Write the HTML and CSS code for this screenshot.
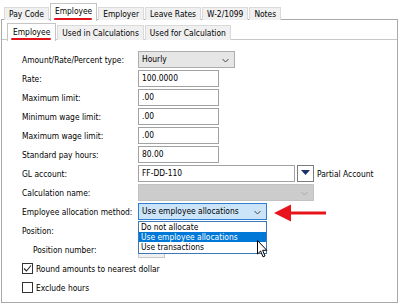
FILE: index.html
```html
<!DOCTYPE html>
<html>
<head>
<meta charset="utf-8">
<link rel="stylesheet" href="styles.css">
</head>
<body>
<div class="window">
  <div class="tabs top-tabs">
    <div class="tab">Pay Code</div>
    <div class="tab active">Employee<span class="mark"></span></div>
    <div class="tab">Employer</div>
    <div class="tab">Leave Rates</div>
    <div class="tab">W-2/1099</div>
    <div class="tab">Notes</div>
  </div>
  <div class="panel">
    <div class="tabs sub-tabs">
      <div class="tab active">Employee<span class="mark"></span></div>
      <div class="tab">Used in Calculations</div>
      <div class="tab">Used for Calculation</div>
    </div>
    <div class="inner">
      <div class="form">
        <div class="label">Amount/Rate/Percent type:</div>
        <div class="field"><div class="box select w97">Hourly<svg class="chev" width="7" height="5" viewBox="0 0 7 5"><path d="M0.5 1 L3.5 4 L6.5 1" fill="none" stroke="#444" stroke-width="1"/></svg></div></div>

        <div class="label">Rate:</div>
        <div class="field"><div class="box w81">100.0000</div></div>

        <div class="label">Maximum limit:</div>
        <div class="field"><div class="box w81">.00</div></div>

        <div class="label">Minimum wage limit:</div>
        <div class="field"><div class="box w81">.00</div></div>

        <div class="label">Maximum wage limit:</div>
        <div class="field"><div class="box w81">.00</div></div>

        <div class="label">Standard pay hours:</div>
        <div class="field"><div class="box w81">80.00</div></div>

        <div class="label">GL account:</div>
        <div class="field">
          <div class="box w156">FF-DD-110</div>
          <div class="btn"><svg width="9" height="5" viewBox="0 0 9 5"><path d="M0 0 L9 0 L4.5 5 Z" fill="#1c2f6e"/></svg></div>
          <span class="side">Partial Account</span>
        </div>

        <div class="label">Calculation name:</div>
        <div class="field"><div class="box disabled w176"><svg class="chev" width="7" height="5" viewBox="0 0 7 5"><path d="M0.5 1 L3.5 4 L6.5 1" fill="none" stroke="#a8a8a8" stroke-width="1"/></svg></div></div>

        <div class="label">Employee allocation method:</div>
        <div class="field"><div class="box select focus w129">Use employee allocations<svg class="chev" width="7" height="5" viewBox="0 0 7 5"><path d="M0.5 1 L3.5 4 L6.5 1" fill="none" stroke="#444" stroke-width="1"/></svg></div></div>

        <div class="label">Position:</div>
        <div class="field"></div>

        <div class="label indent">Position number:</div>
        <div class="field"><div class="box mini"></div></div>

        <div class="check-row"><span class="check checked"><svg width="9" height="9" viewBox="0 0 9 9"><path d="M1 4.5 L3.5 7 L8 1.5" fill="none" stroke="#222" stroke-width="1.1"/></svg></span>Round amounts to nearest dollar</div>
        <div class="check-row"><span class="check"></span>Exclude hours</div>
      </div>
    </div>
  </div>

  <div class="dropdown">
    <div class="opt">Do not allocate</div>
    <div class="opt sel">Use employee allocations</div>
    <div class="opt">Use transactions</div>
  </div>

  <svg class="arrow" width="52" height="20" viewBox="0 0 52 20"><polygon points="0,10 17,1.5 17,18.5" fill="#e8141b"/><rect x="16" y="8.5" width="36" height="3" fill="#e8141b"/></svg>

  <svg class="cursor" width="12" height="18" viewBox="0 0 12 18"><path d="M0.5 0.5 L0.5 14 L3.6 11 L6 16.8 L8 16 L5.6 10.3 L9.8 10.3 Z" fill="#fff" stroke="#000" stroke-width="1"/></svg>
</div>
</body>
</html>
```

FILE: styles.css
```css
html, body {
  margin: 0;
  padding: 0;
}
body {
  width: 398px;
  height: 303px;
  overflow: hidden;
  background: #fff;
  font-family: "DejaVu Sans Condensed", "DejaVu Sans", sans-serif;
  font-stretch: semi-condensed;
  font-size: 8.4px;
  color: #000;
}
.window {
  position: relative;
  width: 398px;
  height: 303px;
}
.tabs {
  display: flex;
  align-items: flex-end;
  gap: 1px;
  position: relative;
  z-index: 1;
}
.top-tabs {
  height: 20px;
  padding-left: 4px;
  margin-bottom: -1px;
}
.tab {
  position: relative;
  background: #f0f0f0;
  border: 1px solid #dadada;
  border-bottom: none;
  padding: 0 4px;
  height: 12px;
  line-height: 12px;
  white-space: nowrap;
}
.tab.active {
  background: #fff;
  border-color: #c4c4c4;
  height: 17px;
  line-height: 15px;
  margin-bottom: -1px;
}
.mark {
  position: absolute;
  left: 3px;
  right: 4px;
  bottom: 1px;
  height: 2px;
  background: #e0121a;
  border-radius: 1px;
}
.panel {
  margin-left: 1px;
  width: 395px;
  height: 282px;
  border: 1px solid #a9a9a9;
  background: #fff;
}
.sub-tabs {
  height: 20px;
  padding-left: 5px;
  margin-bottom: -1px;
}
.sub-tabs .tab {
  height: 14px;
  line-height: 14px;
  padding: 0 4px;
}
.sub-tabs .tab.active {
  height: 17px;
  line-height: 17px;
  padding: 0 5px;
}
.inner {
  border-top: 1px solid #c8c8c8;
  padding: 10px 0 0 20px;
}
.form {
  display: grid;
  grid-template-columns: 116px 1fr;
  grid-auto-rows: 19px;
  align-items: center;
}
.label {
  white-space: nowrap;
}
.label.indent {
  padding-left: 11px;
}
.field {
  display: flex;
  align-items: center;
  height: 19px;
}
.box {
  box-sizing: border-box;
  height: 17px;
  border: 1px solid #a2a2a2;
  background: #fff;
  padding-left: 3px;
  line-height: 15px;
  display: flex;
  align-items: center;
  white-space: nowrap;
  overflow: hidden;
  position: relative;
}
.box.select {
  background: #e6e6e6;
  border-color: #adadad;
}
.box.focus {
  background: #cce4f7;
  border-color: #2f7fd0;
}
.box.disabled {
  background: #cccccc;
  border-color: #c2c2c2;
}
.chev {
  position: absolute;
  right: 5px;
  top: 6px;
}
.w97 { width: 97px; }
.w81 { width: 81px; }
.w156 { width: 157px; }
.w176 { width: 176px; }
.w129 { width: 129px; }
.box.mini {
  width: 27px;
  background: #f0f0f0;
  border-color: #c8c8c8;
}
.btn {
  box-sizing: border-box;
  width: 17px;
  height: 17px;
  margin-left: 2px;
  border: 1px solid #7d7d7d;
  display: flex;
  align-items: center;
  justify-content: center;
  padding-bottom: 2px;
}
.side {
  margin-left: 3px;
  white-space: nowrap;
}
.check-row {
  grid-column: 1 / span 2;
  display: flex;
  align-items: center;
  gap: 3px;
  white-space: nowrap;
}
.check {
  box-sizing: border-box;
  width: 11px;
  height: 11px;
  border: 1px solid #333;
  display: flex;
  align-items: center;
  justify-content: center;
  background: #fff;
}
.dropdown {
  position: absolute;
  left: 138px;
  top: 221px;
  width: 129px;
  box-sizing: border-box;
  border: 1px solid #3d78b8;
  background: #fff;
  padding: 0 0 1px 0;
  z-index: 5;
}
.opt {
  height: 10px;
  line-height: 10px;
  padding-left: 2px;
  white-space: nowrap;
}
.opt.sel {
  background: #0078d7;
  color: #fff;
}
.arrow {
  position: absolute;
  left: 274px;
  top: 203px;
  z-index: 6;
}
.cursor {
  position: absolute;
  left: 257px;
  top: 240px;
  z-index: 7;
}
```
